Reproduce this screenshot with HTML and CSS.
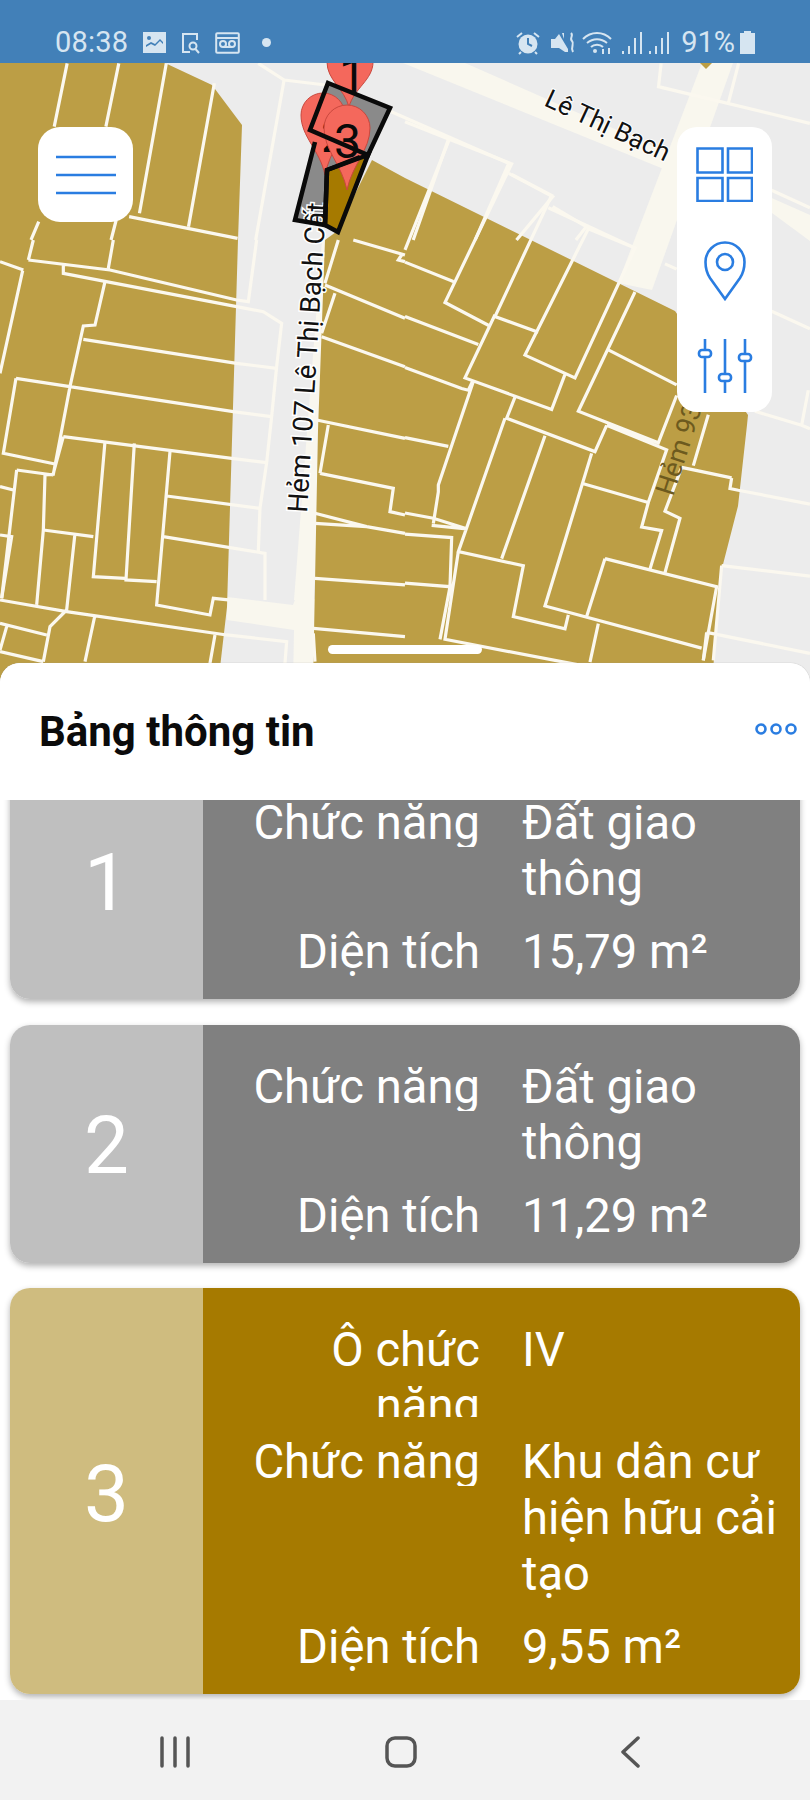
FILE: index.html
```html
<!DOCTYPE html>
<html lang="vi">
<head>
<meta charset="utf-8">
<title>Bảng thông tin</title>
<link rel="stylesheet" href="styles.css">
</head>
<body>
<div class="app">
  <header class="status">
    <div class="status-left">
      <span class="time">08:38</span>
      <svg class="si si-img" viewBox="0 0 23 21"><path class="sf" d="M0 0h23v21H0z"/><circle class="sc" cx="6" cy="6" r="2"/><path class="sc" d="M3 15l5-3 4 2 5-5 3 3v-2l-3-3-5 5-4-2-5 3z"/></svg>
      <svg class="si si-doc" viewBox="0 0 20 22"><path class="sl" d="M15 2H2v18h7"/><path class="sl" d="M16 1v7"/><circle class="sl" cx="12" cy="14" r="3.5"/><path class="sl" d="M14.500 17l3.500 4"/></svg>
      <svg class="si si-vm" viewBox="0 0 25 22"><rect class="sl" x="1.200" y="1.200" width="22.600" height="19.600" rx="1"/><circle class="sl" cx="8" cy="12" r="3"/><circle class="sl" cx="17" cy="12" r="3"/><path class="sl" d="M8 15h9M2 6h21"/></svg>
      <span class="dot"></span>
    </div>
    <div class="status-right">
      <svg class="si si-alarm" viewBox="0 0 26 24"><circle class="sf" cx="13" cy="13" r="9.500"/><path class="sd" d="M13 7v6l4 2"/><path class="sl" d="M2 6l5-4M24 6l-5-4M6 21l-2 2M20 21l2 2"/></svg>
      <svg class="si si-mute" viewBox="0 0 26 24"><path class="sf" d="M1 8h4l4-5 9 15v3l-3 0-6-4H1z"/><path class="sf" d="M12 2h2v6z"/><path class="sl" d="M21 2c3 3-2 5 1 8s-2 5 1 11"/></svg>
      <svg class="si si-wifi" viewBox="0 0 30 24"><path class="sl" d="M1 8c8-8 20-8 28 0M5 12c6-5 14-5 20 0M9 16c3-3 9-3 12 0"/><circle class="sf" cx="13" cy="20" r="2"/><path class="sl" d="M21 23v-5M27 23v-6"/></svg>
      <svg class="si si-sig" viewBox="0 0 23 24"><path class="sl" d="M2 23v-3M8 23v-8M14 23V7M20 23V1"/></svg>
      <svg class="si si-sig" viewBox="0 0 23 24"><path class="sl" d="M2 23v-3M8 23v-8M14 23V7M20 23V1"/></svg>
      <span class="batt-text">91%</span>
      <svg class="si si-batt" viewBox="0 0 15 23"><path class="sf" d="M4 0h7v2h4v21H0V2h4z"/></svg>
    </div>
  </header>

  <section class="map">
    <svg class="map-svg" viewBox="0 63 810 622">
      <rect class="m-bg" x="0" y="63" width="810" height="622"/>
      <path class="m-road" d="M403 63h62L810 215v26L772 213z"/>
      <path class="m-road" d="M702 63h31L652 290l-34-7z"/>
      <path class="m-road" d="M227 597l66 8 3-8 19 2-2 86h-20l1-55-67-10z"/>
      <path class="m-road" d="M322 240l5 0-13 360-20 0z"/>
      <path class="m-gold" d="M0 63H165L212 85 242 125 238 240 233 407 227 607 218 685H0z"/>
      <path class="m-gold" d="M336 232L372 160 405 178 675 311 748 415 747 425 738 506 720 576 712 685H313L318 430 325 240z"/>
      <path class="m-gold" d="M700 63h12l-6 6z"/>

      <g class="parcels" transform="scale(.5165 .3333)">
        <path d="M130 190L105 380M230 190L205 380M322 190L270 640M415 250L365 680M250 650L460 715M225 660L215 720M75 665L60 720"/>
        <path d="M500 190L550 240 495 720M550 240L630 255M1280 190L1275 260 1568 370M1430 190L1410 310"/>
        <path d="M750 330L985 490 920 720M870 410L800 720M985 520L1070 590 1000 720M1070 620L1135 680 1115 720"/>
      </g>
      <g class="parcels" transform="translate(0 240) scale(.3333)">
        <path d="M0 65L70 90M100 0L85 60M85 60L330 90 710 180 745 185 770 0M190 75V100L710 200 790 215 845 250 830 380 815 530 800 668 780 805 775 935M340 0L325 85M68 92L0 400"/>
        <path d="M315 125L285 255 250 258 210 440 160 703 135 705 130 870 110 1095M250 298L710 370 830 385M48 415L700 515 815 530M48 415L10 640 165 672M190 590L695 655 800 668M190 590L160 700M50 690L160 705M50 690L5 1075M0 740L40 750"/>
        <path d="M315 605L280 1010 375 1015M403 610L378 1020 470 1025M510 635L470 1095 630 1125 640 1075 685 1080M500 768L780 805M490 890L795 940V1080M130 870L280 890M225 880L200 1110 150 1160 130 1265M0 1080L200 1115 680 1185 860 1205 855 1270M0 885L35 890 5 1075M285 1125L255 1265M0 1150L140 1185M20 1160L0 1230M0 1235L130 1265M645 1185L630 1270"/>
        <path d="M1015 0L975 130M1005 160L965 280M1060 0L1215 45M1205 45L1195 60 1215 65M975 135L1215 235M965 290L1215 380M950 540L1215 595M985 555L960 700M960 700L1180 745 1170 815 1215 825M945 820L1100 860 1215 880M945 850L1100 860M945 1015L1215 1035M940 1165L1215 1190M940 1180L945 1265"/>
      </g>
      <g class="parcels" transform="translate(405 120) scale(.3333 .3509)">
        <path d="M135 50L0 370M0 5L320 125 120 520 250 585M320 155L440 215 270 560 400 605M430 250L690 365 510 735 360 670 550 310 690 365M0 405L145 460M0 560L220 640M270 555L180 735 440 825 480 725M0 705L170 765 190 770 205 740"/>
        <path d="M205 745L100 1040V1060L85 1150M0 905L130 930M330 790L305 850 570 945 605 870M690 490L520 830 760 920 815 785M610 655L815 755M605 870L785 940 730 1090 710 1160 770 1170 735 1280"/>
        <path d="M300 850L160 1230 355 1270 325 1415 480 1450 490 1410M420 900L290 1250M560 950L420 1385 890 1505M530 1035L730 1090M600 1250L935 1330 895 1540M600 1250L545 1415M0 1120L85 1135 185 1165M80 1155L185 1165M0 1180L140 1190 135 1330 0 1320M160 1230L120 1480 560 1560M135 1330L105 1480M580 1435L555 1545"/>
        <path d="M905 1460L1215 1520M905 1460L895 1540M950 1270L1215 1300M950 1270L925 1540M1000 1055L1215 1095M980 1020L975 1050 1000 1055M830 990L980 1020M830 990L780 1115 825 1135 780 1290M910 840L865 985M1050 830L1190 870 1215 880M1190 870L1210 770M1100 545L1215 595M780 410L815 425M1100 200L1215 250"/>
      </g>

      <text class="m-label m-hem93" transform="translate(673 497) rotate(-72)">Hẻm 93</text>
      <text class="m-label m-le" transform="translate(543 105) rotate(25)">Lê Thị Bạch</text>

      <path class="p-grey" d="M328 83L390 108 368 155 310 130z"/>
      <path class="p-grey" d="M315 142L295 220 325 225 327 170 360 157z"/>
      <path class="p-gold" d="M327 170L368 155 338 232 325 225z"/>
      <text class="m-label m-hem" transform="translate(307 513) rotate(-86.500)">Hẻm 107 Lê Thị Bạch Cất</text>

      <path class="pin" d="M349 107C344 88 327 80 327 62a23 23 0 0 1 46 0C373 80 354 88 349 107z"/>
      <path class="pin" d="M325 175C320 150 301 137 301 115a22 22 0 0 1 44 0C345 137 330 150 325 175z"/>
      <text class="pin-num" x="321" y="152">2</text>
      <path class="pin" d="M347 190C342 165 324 150 324 128a23 23 0 0 1 46 0C370 150 352 165 347 190z"/>
      <path class="p-line" d="M328 83L390 108 368 155 310 130z"/>
      <path class="p-line" d="M315 142L295 220 325 225 327 170 360 157"/>
      <path class="p-line" d="M327 170L368 155 338 232 325 225z"/>
      <text class="pin-num" x="339" y="92">1</text>
      <text class="pin-num" x="334" y="158">3</text>
    </svg>

    <button class="menu-btn" type="button" aria-label="Menu">
      <svg class="menu-icon" viewBox="0 0 60 40"><path class="ic" d="M0 2h60M0 20h60M0 38h60"/></svg>
    </button>

    <div class="tools">
      <svg class="tool-grid" viewBox="0 0 57 55"><path class="ic" d="M1.500 1.500h25v24h-25zM32 1.500h24v24H32zM1.500 31h25v23h-25zM32 31h24v23H32z"/></svg>
      <svg class="tool-pin" viewBox="0 0 42 60"><path class="ic" d="M21 58L6 37C2 31 1.500 27 1.500 21a19.500 19.500 0 0 1 39 0c0 6-.5 10-4.500 16z"/><circle class="ic" cx="21" cy="21" r="8"/></svg>
      <svg class="tool-sliders" viewBox="0 0 56 54"><path class="ic" d="M8 0v11M8 18v36M28 0v35M28 42v12M48 0v15M48 22v32"/><rect class="ic" x="2" y="11" width="12" height="7" rx="3"/><rect class="ic" x="22" y="35" width="12" height="7" rx="3"/><rect class="ic" x="42" y="15" width="12" height="7" rx="3"/></svg>
    </div>

    <div class="handle"></div>
  </section>

  <section class="sheet">
    <div class="sheet-head">
      <h1 class="title">Bảng thông tin</h1>
      <svg class="more" viewBox="0 0 42 12"><circle class="ic" cx="6" cy="6" r="4.500"/><circle class="ic" cx="21" cy="6" r="4.500"/><circle class="ic" cx="36" cy="6" r="4.500"/></svg>
    </div>
    <div class="list">
      <div class="list-inner">
        <article class="card card-grey">
          <div class="num">1</div>
          <div class="body">
            <div class="row"><div class="label clip-one">Chức năng</div><div class="value">Đất giao thông</div></div>
            <div class="row"><div class="label">Diện tích</div><div class="value">15,79 m²</div></div>
          </div>
        </article>
        <article class="card card-grey">
          <div class="num">2</div>
          <div class="body">
            <div class="row"><div class="label clip-one">Chức năng</div><div class="value">Đất giao thông</div></div>
            <div class="row"><div class="label">Diện tích</div><div class="value">11,29 m²</div></div>
          </div>
        </article>
        <article class="card card-gold">
          <div class="num">3</div>
          <div class="body">
            <div class="row"><div class="label clip-two">Ô chức năng</div><div class="value">IV</div></div>
            <div class="row"><div class="label clip-one">Chức năng</div><div class="value">Khu dân cư hiện hữu cải tạo</div></div>
            <div class="row"><div class="label">Diện tích</div><div class="value">9,55 m²</div></div>
          </div>
        </article>
      </div>
    </div>
  </section>

  <nav class="navbar">
    <svg class="nav-ic" viewBox="0 0 32 32"><path class="nv" d="M3 2v28M16 2v28M29 2v28"/></svg>
    <svg class="nav-ic" viewBox="0 0 32 32"><rect class="nv" x="2" y="2" width="28" height="28" rx="8"/></svg>
    <svg class="nav-ic" viewBox="0 0 32 32"><path class="nv" d="M24 2L9 16l15 14"/></svg>
  </nav>
</div>
</body>
</html>
```

FILE: styles.css
```css
* { box-sizing: border-box; }
html, body { margin: 0; padding: 0; }
body { font-family: Roboto, "Liberation Sans", sans-serif; background: #fff; }

.app { width: 810px; height: 1800px; display: flex; flex-direction: column; overflow: hidden; }

/* status bar */
.status { height: 63px; flex: none; background: #4280b8; color: #d6e5f1; display: flex; justify-content: space-between; align-items: flex-end; padding: 0 55px 7px; position: relative; z-index: 3; }
.status-left, .status-right { display: flex; align-items: center; height: 27px; }
.time { font-size: 29px; line-height: 27px; width: 88px; letter-spacing: .2px; }
.si { display: block; flex: none; }
.si-img { width: 23px; height: 21px; margin-right: 15px; }
.si-doc { width: 20px; height: 22px; margin-right: 14px; }
.si-vm { width: 25px; height: 22px; margin-right: 22px; }
.dot { width: 9px; height: 9px; border-radius: 50%; background: #d6e5f1; }
.si-alarm { width: 26px; height: 24px; margin-right: 9px; }
.si-mute { width: 26px; height: 24px; margin-right: 6px; }
.si-wifi { width: 30px; height: 24px; margin-right: 9px; }
.si-sig { width: 23px; height: 24px; margin-right: 4px; }
.batt-text { font-size: 29px; line-height: 27px; margin: 0 5px 0 6px; }
.si-batt { width: 15px; height: 23px; }
.sf { fill: #d6e5f1; }
.sc { fill: #4280b8; }
.sl { fill: none; stroke: #d6e5f1; stroke-width: 2; }
.sd { fill: none; stroke: #4280b8; stroke-width: 2; }

/* map */
.map { height: 622px; margin-bottom: -22px; flex: none; position: relative; overflow: hidden; }
.map-svg { display: block; width: 810px; height: 622px; }
.m-bg { fill: #ececec; }
.m-road { fill: #f9f7ee; }
.m-gold { fill: #bc9e45; }
.parcels path { fill: none; stroke: #fbf8ef; stroke-width: 3.200px; vector-effect: non-scaling-stroke; stroke-linejoin: miter; }
.m-label { font-family: Roboto, "Liberation Sans", sans-serif; fill: #111; }
.m-le { font-size: 26px; paint-order: stroke; stroke: #fff; stroke-width: 2px; }
.m-hem { font-size: 27.600px; paint-order: stroke; stroke: #fff; stroke-width: 3px; }
.m-hem93 { font-size: 27px; fill: #6d5a1e; }
.p-grey { fill: #8a8a8a; }
.p-gold { fill: #a67a00; }
.p-line { fill: none; stroke: #0a0a0a; stroke-width: 4.500px; stroke-linejoin: miter; }
.pin { fill: #f4685c; stroke: #c9483e; stroke-width: 1px; }
.pin-num { font-family: Roboto, "Liberation Sans", sans-serif; font-size: 48px; fill: #0a0a0a; }

.ic { fill: none; stroke: #2a7de1; stroke-width: 2.600px; }
.menu-btn { position: absolute; left: 38px; top: 64px; width: 95px; height: 95px; padding: 0; border: 0; background: #fff; border-radius: 22px; display: flex; align-items: center; justify-content: center; }
.menu-icon { width: 60px; height: 40px; display: block; }
.tools { position: absolute; left: 677px; top: 64px; width: 95px; height: 285px; background: #fff; border-radius: 20px; display: flex; flex-direction: column; align-items: center; padding-top: 20px; }
.tool-grid { width: 57px; height: 55px; display: block; margin-bottom: 39px; }
.tool-pin { width: 42px; height: 60px; display: block; margin-bottom: 38px; }
.tool-sliders { width: 56px; height: 54px; display: block; }
.handle { position: absolute; left: 328px; top: 582px; width: 154px; height: 9px; border-radius: 5px; background: #fff; }

/* sheet */
.sheet { flex: 1; min-height: 0; position: relative; z-index: 2; background: #fff; border-radius: 20px 20px 0 0; box-shadow: 0 0 1px #999; display: flex; flex-direction: column; overflow: hidden; }
.sheet-head { height: 137px; flex: none; display: flex; justify-content: space-between; align-items: center; padding: 0 13px 0 39px; position: relative; z-index: 1; background: #fff; }
.title { margin: 0; font-size: 42px; font-weight: 700; color: #0b0b0b; line-height: 48px; }
.more { width: 42px; height: 12px; display: block; margin-bottom: 5px; }
.list { flex: 1; min-height: 0; overflow: hidden; padding: 0 10px; }
.list-inner { margin-top: -39px; display: flex; flex-direction: column; gap: 25.500px; }
.card { display: flex; border-radius: 20px; overflow: hidden; box-shadow: 0 3px 6px rgba(0,0,0,.3); color: #fff; }
.card-grey .num { background: #bfbfbf; }
.card-grey .body { background: #808080; }
.card-gold .num { background: #cfbc7f; }
.card-gold .body { background: #a67a00; }
.num { width: 193px; flex: none; display: flex; align-items: center; justify-content: center; font-size: 80px; font-weight: 400; padding-top: 5px; }
.body { flex: 1; padding: 34px 8px 19px 35px; display: flex; flex-direction: column; gap: 17px; }
.row { display: grid; grid-template-columns: 242px 1fr; column-gap: 42px; font-size: 47.200px; line-height: 56px; }
.label { text-align: right; overflow: hidden; }
.clip-one { max-height: 52px; }
.clip-two { max-height: 95px; }

/* nav */
.navbar { height: 100px; flex: none; background: #f2f2f2; display: grid; grid-template-columns: 226px 229px 1fr; padding: 36px 0 32px 159px; position: relative; z-index: 3; }
.nav-ic { width: 32px; height: 32px; display: block; }
.nv { fill: none; stroke: #555; stroke-width: 3.500px; stroke-linecap: round; stroke-linejoin: round; }
```
